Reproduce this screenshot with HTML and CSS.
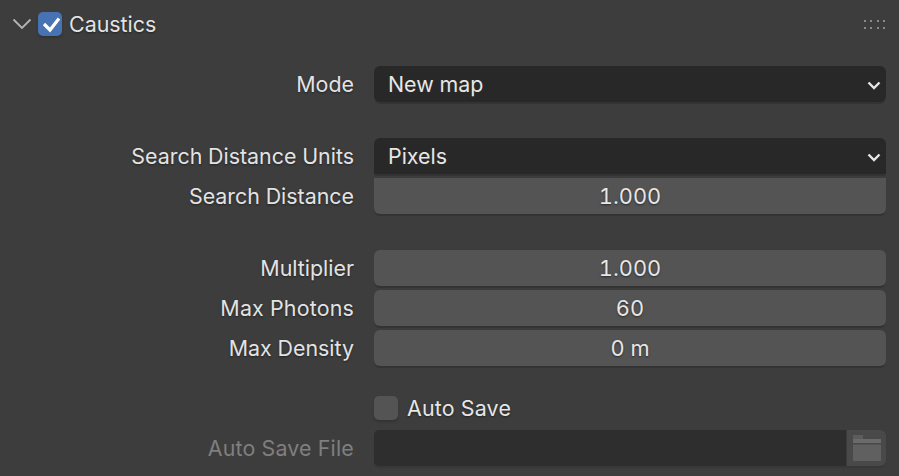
FILE: index.html
```html
<!DOCTYPE html>
<html lang="en">
<head>
<meta charset="utf-8">
<title>Caustics</title>
<link rel="stylesheet" href="styles.css">
</head>
<body>
<div class="panel">
  <header class="head">
    <svg class="chev" width="20" height="12" viewBox="0 0 20 12"><path d="M1.500 1.500l8.500 8.500 8.500-8.500" fill="none" stroke="#b4b4b4" stroke-width="1.800"/></svg>
    <span class="check on"><svg width="24" height="24" viewBox="0 0 24 24"><path d="M6 12l6 6 9-11.500" fill="none" stroke="#fff" stroke-width="3.200"/></svg></span>
    <span class="title">Caustics</span>
    <svg class="grip" width="22" height="10" viewBox="0 0 22 10" fill="#8a8a8a"><rect x="0" y="0" width="2" height="2"/><rect x="6" y="0" width="2" height="2"/><rect x="13" y="0" width="2" height="2"/><rect x="19" y="0" width="2" height="2"/><rect x="0" y="7" width="2" height="2"/><rect x="6" y="7" width="2" height="2"/><rect x="13" y="7" width="2" height="2"/><rect x="19" y="7" width="2" height="2"/></svg>
  </header>

  <div class="group first">
    <div class="row"><label>Mode</label><div class="field dark round">New map<svg class="arrow" width="14" height="9" viewBox="0 0 14 9"><path d="M1.500 1.500l5.500 5.500 5.500-5.500" fill="none" stroke="#e6e6e6" stroke-width="2.400"/></svg></div></div>
  </div>

  <div class="group">
    <div class="row"><label>Search Distance Units</label><div class="field dark round-top">Pixels<svg class="arrow" width="14" height="9" viewBox="0 0 14 9"><path d="M1.500 1.500l5.500 5.500 5.500-5.500" fill="none" stroke="#e6e6e6" stroke-width="2.400"/></svg></div></div>
    <div class="row"><label>Search Distance</label><div class="field num round-bottom">1.000</div></div>
  </div>

  <div class="group">
    <div class="row"><label>Multiplier</label><div class="field num round">1.000</div></div>
    <div class="row"><label class="wide">Max Photons</label><div class="field num round">60</div></div>
    <div class="row"><label>Max Density</label><div class="field num round">0 m</div></div>
  </div>

  <div class="group check-group">
    <div class="row"><label></label><div class="toggle wide"><span class="check off"></span><span>Auto Save</span></div></div>
    <div class="row"><label class="muted wide">Auto Save File</label>
      <div class="file">
        <div class="field dark-muted"></div>
        <div class="folder"><svg width="30" height="26" viewBox="0 0 30 26"><path d="M1 0h10v4H1z" fill="#5c5c5c"/><path d="M1 4h28v4H1z" fill="#6a6a6a"/><path d="M1 9.500h28v16.500H1z" fill="#606060"/></svg></div>
      </div>
    </div>
  </div>
</div>
</body>
</html>
```

FILE: styles.css
```css
* { box-sizing: border-box; }
html, body { margin: 0; height: 100%; }
body {
  background: #3d3d3d;
  color: #e6e6e6;
  font-family: Inter, "Liberation Sans", sans-serif;
  font-size: 21.4px;
  font-variant-numeric: tabular-nums;
  overflow: hidden;
}
.panel { width: 899px; height: 476px; overflow: hidden; padding: 0 13px 0 0; }
.head { display: flex; align-items: center; height: 48px; padding-left: 12px; }
.chev { margin-right: 6px; }
.check { display: flex; align-items: center; justify-content: center; width: 24px; height: 24px; border-radius: 5px; flex: none; }
.check.on { background: #4772b3; box-shadow: 0 2px 2px #333; }
.check.off { background: #545454; box-shadow: 0 2px 2px #333; }
.title { margin-left: 7px; text-shadow: 0 1px 2px #222; color: #e3e3e3; }
.grip { margin-left: auto; margin-right: 0; margin-top: 2px; }
.group { margin-top: 36px; display: flex; flex-direction: column; gap: 4px; }
.group.first { margin-top: 18px; }
.group.check-group { margin-top: 24px; }
.row { display: flex; align-items: center; height: 36px; }
label { width: 354px; text-align: right; flex: none; text-shadow: 0 1px 2px #222; color: #e3e3e3; }
label.muted { color: #7f7f7f; text-shadow: none; }
.wide { letter-spacing: 0.2px; }
.field {
  position: relative;
  flex: 1;
  margin-left: 20px;
  height: 36px;
  display: flex;
  align-items: center;
  box-shadow: 0 3px 1px -1px #333;
}
.dark { background: #282828; padding-left: 14px; }
.dark-muted { background: #2e2e2e; border-radius: 5px 0 0 5px; margin-left: 0; box-shadow: 0 2px 1px #383838; }
.num { background: #545454; justify-content: center; font-size: 21.8px; text-shadow: 0 1px 2px #2a2a2a; }
.round { border-radius: 6px; }
.round-top { border-radius: 6px 6px 0 0; }
.round-bottom { border-radius: 0 0 6px 6px; }
.arrow { position: absolute; right: 5px; top: 15px; }
.toggle { display: flex; align-items: center; gap: 9px; margin-left: 20px; text-shadow: 0 1px 2px #222; }
.file { flex: 1; margin-left: 20px; display: flex; height: 36px; gap: 1px; }
.folder { width: 39px; background: #494949; border-radius: 0 6px 6px 0; display: flex; align-items: center; justify-content: center; box-shadow: 0 2px 1px #383838; }
```
